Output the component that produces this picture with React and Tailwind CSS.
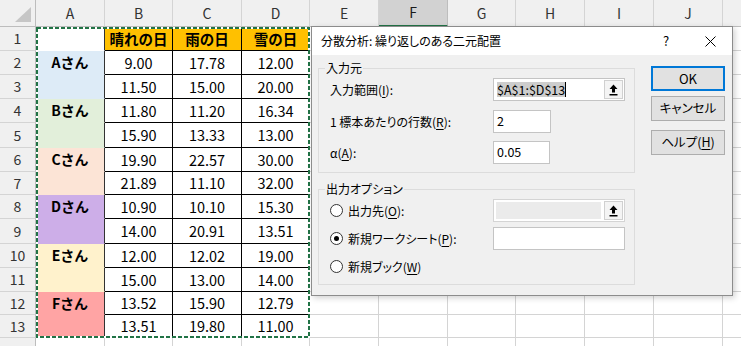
const COLS = [
  ["A", "w-[69px]"],
  ["B", "w-[68px]"],
  ["C", "w-[69px]"],
  ["D", "w-[68px]"],
  ["E", "w-[69px]"],
  ["F", "w-[69px]"],
  ["G", "w-[68px]"],
  ["H", "w-[69px]"],
  ["I", "w-[69px]"],
  ["J", "w-[69px]"],
  ["K", "w-[70px]"],
];

const ROWS = [
  { h: "h-[24px]", a: "", fill: "bg-white", v: ["晴れの日", "雨の日", "雪の日"] },
  { h: "h-[24px]", a: "Aさん", fill: "bg-[#ddebf7]", v: ["9.00", "17.78", "12.00"] },
  { h: "h-[24px]", a: "", fill: "bg-[#ddebf7]", v: ["11.50", "15.00", "20.00"] },
  { h: "h-[24px]", a: "Bさん", fill: "bg-[#e2efda]", v: ["11.80", "11.20", "16.34"] },
  { h: "h-[25px]", a: "", fill: "bg-[#e2efda]", v: ["15.90", "13.33", "13.00"] },
  { h: "h-[24px]", a: "Cさん", fill: "bg-[#fce4d6]", v: ["19.90", "22.57", "30.00"] },
  { h: "h-[23px]", a: "", fill: "bg-[#fce4d6]", v: ["21.89", "11.10", "32.00"] },
  { h: "h-[24px]", a: "Dさん", fill: "bg-[#cdaee8]", v: ["10.90", "10.10", "15.30"] },
  { h: "h-[25px]", a: "", fill: "bg-[#cdaee8]", v: ["14.00", "20.91", "13.51"] },
  { h: "h-[24px]", a: "Eさん", fill: "bg-[#fff2cc]", v: ["12.00", "12.02", "19.00"] },
  { h: "h-[24px]", a: "", fill: "bg-[#fff2cc]", v: ["15.00", "13.00", "14.00"] },
  { h: "h-[23px]", a: "Fさん", fill: "bg-[#ffa4a4]", v: ["13.52", "15.90", "12.79"] },
  { h: "h-[23px]", a: "", fill: "bg-[#ffa4a4]", v: ["13.51", "19.80", "11.00"] },
  { h: "h-[24px]", a: null, fill: "", v: null },
];

function Cell({ row, ci, w }) {
  if (row.v && ci === 0) {
    return (
      <div className={`${w} shrink-0 ${row.fill} border-r border-b border-r-[#333] border-b-transparent flex items-center justify-center font-bold text-[14px]`}>
        {row.a}
      </div>
    );
  }
  if (row.v && ci <= 3) {
    const head = row.a === "" && row.fill === "bg-white";
    return (
      <div className={`${w} shrink-0 border-r border-b border-black flex items-center justify-center text-[14.5px] ${head ? "bg-[#ffc000] font-bold" : "bg-white"}`}>
        {row.v[ci - 1]}
      </div>
    );
  }
  return <div className={`${w} shrink-0 border-r border-b border-[#d4d4d4] bg-white`} />;
}

function RefIcon() {
  return (
    <svg width="9" height="12" viewBox="0 0 9 12">
      <path d="M4.5 0.5 L8.5 5 L6 5 L6 8.5 L3 8.5 L3 5 L0.5 5 Z" fill="#000" />
      <rect x="0.5" y="10" width="8" height="1.5" fill="#000" />
    </svg>
  );
}

function RefButton() {
  return (
    <div className="w-[21px] h-full p-[1px] shrink-0">
      <div className="w-full h-full bg-[#f4f4f4] border border-[#d0d0d0] flex items-center justify-center">
        <RefIcon />
      </div>
    </div>
  );
}

function Radio({ on }) {
  return (
    <span className="w-[13px] h-[13px] rounded-full border border-[#333] bg-white flex items-center justify-center shrink-0">
      {on && <span className="w-[5px] h-[5px] rounded-full bg-black" />}
    </span>
  );
}

function Key({ k }) {
  return <span className="underline underline-offset-2">{k}</span>;
}

function Dialog() {
  return (
    <div className="absolute left-[311px] top-[26px] w-[422px] h-[270px] border border-[#8c8c8c] bg-[#f0f0f0] shadow-[2px_2px_6px_rgba(0,0,0,0.18)] flex flex-col text-black [font-feature-settings:'palt']">
      <div className="h-[28px] bg-white flex items-center shrink-0">
        <div className="flex-1 pl-[9px] text-[12px]">分散分析: 繰り返しのある二元配置</div>
        <div className="w-[44px] h-full flex items-center justify-center text-[13px]">?</div>
        <div className="w-[44px] h-full flex items-center justify-center">
          <svg width="11" height="11" viewBox="0 0 11 11">
            <path d="M0.5 0.5 L10.5 10.5 M10.5 0.5 L0.5 10.5" stroke="#000" strokeWidth="1" />
          </svg>
        </div>
      </div>
      <div className="flex-1 flex text-[12px]">
        <div className="ml-[6px] w-[317px] shrink-0">
          <fieldset className="mt-[6px] border border-[#dcdcdc] pt-[3px] pb-[8px]">
            <legend className="ml-[6px] px-[1px] leading-[14px]">入力元</legend>
            <div className="flex items-center h-[23px]">
              <div className="w-[174px] pl-[11px]">入力範囲(<Key k="I" />):</div>
              <div className="w-[132px] h-[23px] border border-[#c4c4c4] bg-white flex items-center">
                <div className="flex-1 pl-[3px] flex items-center text-[12.5px]">
                  <span className="bg-[#cdcdcd] leading-[15px]">$A$1:$D$13</span>
                  <span className="w-[1px] h-[15px] bg-black" />
                </div>
                <RefButton />
              </div>
            </div>
            <div className="flex items-center h-[23px] mt-[9px]">
              <div className="w-[174px] pl-[11px]">1 標本あたりの行数(<Key k="R" />):</div>
              <div className="w-[58px] h-[23px] border border-[#c4c4c4] bg-white flex items-center pl-[3px] text-[12.5px]">2</div>
            </div>
            <div className="flex items-center h-[23px] mt-[8px]">
              <div className="w-[174px] pl-[11px]">α(<Key k="A" />):</div>
              <div className="w-[57px] h-[23px] border border-[#c4c4c4] bg-white flex items-center pl-[3px] text-[12.5px]">0.05</div>
            </div>
          </fieldset>
          <fieldset className="mt-[9px] border border-[#dcdcdc] pt-[3px] pb-[6px]">
            <legend className="ml-[6px] px-[1px] leading-[14px]">出力オプション</legend>
            <div className="flex items-center h-[23px]">
              <div className="w-[174px] pl-[11px] flex items-center gap-[5px]">
                <Radio />
                <span>出力先(<Key k="O" />):</span>
              </div>
              <div className="w-[132px] h-[23px] border border-[#d4d4d4] bg-white flex items-center">
                <div className="flex-1 h-full p-[2px]">
                  <div className="w-full h-full bg-[#ebebeb]" />
                </div>
                <RefButton />
              </div>
            </div>
            <div className="flex items-center h-[23px] mt-[5px]">
              <div className="w-[174px] pl-[11px] flex items-center gap-[5px]">
                <Radio on />
                <span>新規ワークシート(<Key k="P" />):</span>
              </div>
              <div className="w-[132px] h-[23px] border border-[#c4c4c4] bg-white" />
            </div>
            <div className="flex items-center h-[23px] mt-[5px]">
              <div className="w-[174px] pl-[11px] flex items-center gap-[5px]">
                <Radio />
                <span>新規ブック(<Key k="W" />)</span>
              </div>
            </div>
          </fieldset>
        </div>
        <div className="ml-[16px] mt-[11px] w-[74px] flex flex-col">
          <button className="h-[25px] bg-[#e1e1e1] border-2 border-[#0078d7] text-[13px]">OK</button>
          <button className="h-[25px] mt-[5px] bg-[#e1e1e1] border border-[#adadad] text-[12.5px]">キャンセル</button>
          <button className="h-[25px] mt-[9px] bg-[#e1e1e1] border border-[#adadad] text-[12.5px]">
            ヘルプ(<Key k="H" />)
          </button>
        </div>
      </div>
    </div>
  );
}

export default function App() {
  return (
    <div className="relative w-[741px] h-[346px] overflow-hidden bg-white text-black font-['Noto_Sans_CJK_JP',sans-serif]">
      <div className="flex h-[27px]">
        <div className="w-[36px] shrink-0 bg-[#f0f0f0] border-r border-b border-r-[#bdbdbd] border-b-[#bdbdbd] flex items-end justify-end p-[3px]">
          <svg width="18" height="17" viewBox="0 0 18 17">
            <path d="M17 1 L17 16 L1 16 Z" fill="#c6c6c6" />
          </svg>
        </div>
        {COLS.map(([k, w]) => (
          <div
            key={k}
            className={`${w} shrink-0 flex items-center justify-center text-[14px] border-r ${
              k === "F"
                ? "bg-[#d2d2d2] border-r-[#bdbdbd] border-b-2 border-b-[#217346] text-[#1a1a1a]"
                : "bg-[#f0f0f0] border-r-[#d4d4d4] border-b border-b-[#bdbdbd] text-[#333]"
            }`}
          >
            {k === "K" ? null : k}
          </div>
        ))}
      </div>
      {ROWS.map((row, ri) => (
        <div key={ri} className={`flex ${row.h}`}>
          <div className="w-[36px] shrink-0 bg-[#f0f0f0] border-r border-b border-r-[#bdbdbd] border-b-[#d4d4d4] flex items-center justify-center text-[14px] text-[#333]">
            {row.v ? ri + 1 : null}
          </div>
          {COLS.map(([k, w], ci) => (
            <Cell key={k} row={row} ci={ci} w={w} />
          ))}
        </div>
      ))}
      <svg className="absolute left-0 top-0 pointer-events-none" width="741" height="346">
        <rect x="37" y="28" width="272" height="309" fill="none" stroke="#fff" strokeWidth="2" />
        <rect x="37" y="28" width="272" height="309" fill="none" stroke="#217346" strokeWidth="2" strokeDasharray="4 2" />
      </svg>
      <Dialog />
    </div>
  );
}
